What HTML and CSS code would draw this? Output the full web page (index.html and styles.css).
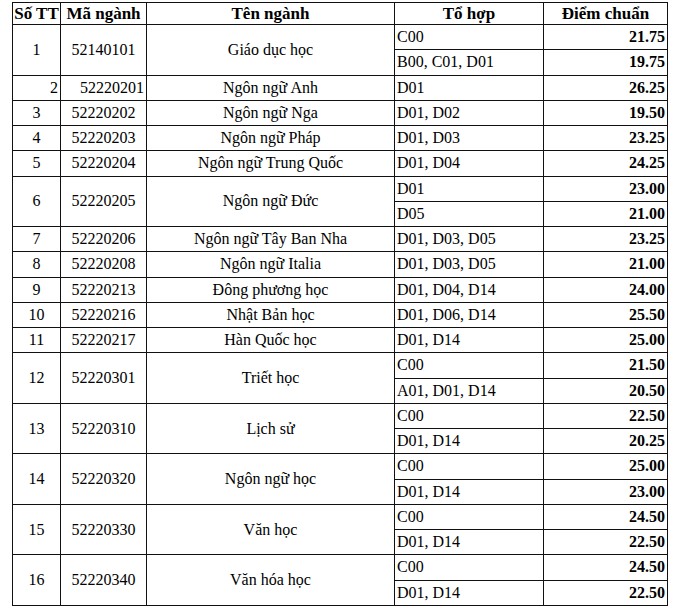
FILE: index.html
```html
<!DOCTYPE html>
<html lang="vi">
<head>
<meta charset="utf-8">
<title>Điểm chuẩn</title>
<link rel="stylesheet" href="styles.css">
</head>
<body>
<div class="wrap">
<table class="scores">
  <colgroup>
    <col class="c-stt"><col class="c-ma"><col class="c-ten"><col class="c-th"><col class="c-diem">
  </colgroup>
  <thead>
    <tr class="head">
      <th>Số TT</th><th>Mã ngành</th><th>Tên ngành</th><th>Tổ hợp</th><th>Điểm chuẩn</th>
    </tr>
  </thead>
  <tbody>
    <tr><td class="ctr" rowspan="2">1</td><td class="ctr" rowspan="2">52140101</td><td class="ctr" rowspan="2">Giáo dục học</td><td class="th">C00</td><td class="pt">21.75</td></tr>
    <tr><td class="th">B00, C01, D01</td><td class="pt">19.75</td></tr>
    <tr><td class="rt">2</td><td class="rt">52220201</td><td class="ctr">Ngôn ngữ Anh</td><td class="th">D01</td><td class="pt">26.25</td></tr>
    <tr><td class="ctr">3</td><td class="ctr">52220202</td><td class="ctr">Ngôn ngữ Nga</td><td class="th">D01, D02</td><td class="pt">19.50</td></tr>
    <tr><td class="ctr">4</td><td class="ctr">52220203</td><td class="ctr">Ngôn ngữ Pháp</td><td class="th">D01, D03</td><td class="pt">23.25</td></tr>
    <tr><td class="ctr">5</td><td class="ctr">52220204</td><td class="ctr">Ngôn ngữ Trung Quốc</td><td class="th">D01, D04</td><td class="pt">24.25</td></tr>
    <tr><td class="ctr" rowspan="2">6</td><td class="ctr" rowspan="2">52220205</td><td class="ctr" rowspan="2">Ngôn ngữ Đức</td><td class="th">D01</td><td class="pt">23.00</td></tr>
    <tr><td class="th">D05</td><td class="pt">21.00</td></tr>
    <tr><td class="ctr">7</td><td class="ctr">52220206</td><td class="ctr">Ngôn ngữ Tây Ban Nha</td><td class="th">D01, D03, D05</td><td class="pt">23.25</td></tr>
    <tr><td class="ctr">8</td><td class="ctr">52220208</td><td class="ctr">Ngôn ngữ Italia</td><td class="th">D01, D03, D05</td><td class="pt">21.00</td></tr>
    <tr><td class="ctr">9</td><td class="ctr">52220213</td><td class="ctr">Đông phương học</td><td class="th">D01, D04, D14</td><td class="pt">24.00</td></tr>
    <tr><td class="ctr">10</td><td class="ctr">52220216</td><td class="ctr">Nhật Bản học</td><td class="th">D01, D06, D14</td><td class="pt">25.50</td></tr>
    <tr><td class="ctr">11</td><td class="ctr">52220217</td><td class="ctr">Hàn Quốc học</td><td class="th">D01, D14</td><td class="pt">25.00</td></tr>
    <tr><td class="ctr" rowspan="2">12</td><td class="ctr" rowspan="2">52220301</td><td class="ctr" rowspan="2">Triết học</td><td class="th">C00</td><td class="pt">21.50</td></tr>
    <tr><td class="th">A01, D01, D14</td><td class="pt">20.50</td></tr>
    <tr><td class="ctr" rowspan="2">13</td><td class="ctr" rowspan="2">52220310</td><td class="ctr" rowspan="2">Lịch sử</td><td class="th">C00</td><td class="pt">22.50</td></tr>
    <tr><td class="th">D01, D14</td><td class="pt">20.25</td></tr>
    <tr><td class="ctr" rowspan="2">14</td><td class="ctr" rowspan="2">52220320</td><td class="ctr" rowspan="2">Ngôn ngữ học</td><td class="th">C00</td><td class="pt">25.00</td></tr>
    <tr><td class="th">D01, D14</td><td class="pt">23.00</td></tr>
    <tr><td class="ctr" rowspan="2">15</td><td class="ctr" rowspan="2">52220330</td><td class="ctr" rowspan="2">Văn học</td><td class="th">C00</td><td class="pt">24.50</td></tr>
    <tr><td class="th">D01, D14</td><td class="pt">22.50</td></tr>
    <tr><td class="ctr" rowspan="2">16</td><td class="ctr" rowspan="2">52220340</td><td class="ctr" rowspan="2">Văn hóa học</td><td class="th">C00</td><td class="pt">24.50</td></tr>
    <tr><td class="th">D01, D14</td><td class="pt">22.50</td></tr>
  </tbody>
</table>
</div>
</body>
</html>
```
FILE: styles.css
```css
html, body {
  margin: 0;
  padding: 0;
  background: #ffffff;
}
.wrap {
  padding: 2px 0 0 12px;
}
.scores {
  border-collapse: collapse;
  table-layout: fixed;
  width: 656px;
  font-family: "Liberation Serif", "Times New Roman", serif;
  font-size: 16px;
  color: #000;
}
.c-stt { width: 48px; }
.c-ma { width: 86px; }
.c-ten { width: 248px; }
.c-th { width: 149px; }
.c-diem { width: 124px; }
.scores th, .scores td {
  border: 1px solid #111;
  padding: 0 2px;
  vertical-align: middle;
  line-height: 18px;
  white-space: nowrap;
  overflow: hidden;
}
.scores th {
  font-weight: bold;
  font-size: 17px;
  text-align: center;
  height: 21px;
  padding: 0 1px;
}
.scores td {
  height: 24.26px;
}
.ctr { text-align: center; }
.rt { text-align: right; }
.th { text-align: left; padding-left: 2px; }
.pt { text-align: right; font-weight: bold; padding-right: 1px; }
```
